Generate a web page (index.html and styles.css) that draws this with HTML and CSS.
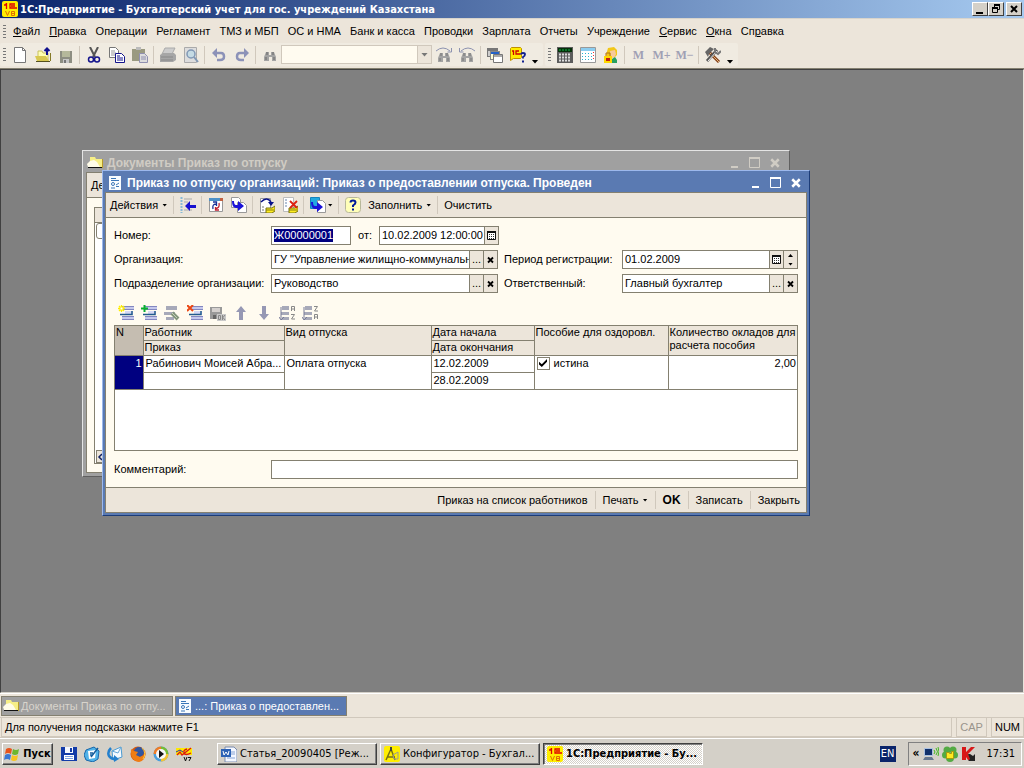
FILE: index.html
```html
<!DOCTYPE html>
<html lang="ru">
<head>
<meta charset="utf-8">
<title>1С:Предприятие - Бухгалтерский учет для гос. учреждений Казахстана</title>
<link rel="stylesheet" href="styles.css">
</head>
<body>
<svg class="sprite" aria-hidden="true">
  <symbol id="i-1c" viewBox="0 0 16 16"><rect width="16" height="16" rx="2" fill="#ffee00"/><path d="M2 4h2V2.500M4.500 2v6M13 3H8v4h7M9 5h4" fill="none" stroke="#e00000" stroke-width="1.300"/><path d="M3.500 10l2 4.500 2-4.500M9.500 10.500h3v4h-3zM9.500 12.500h3" fill="none" stroke="#e07000"/></symbol>
  <symbol id="i-new" viewBox="0 0 16 16"><path d="M2.500.500h8l3 3v12h-11z" fill="#fff" stroke="#777"/><path d="M10.500.500v3h3" fill="none" stroke="#777"/></symbol>
  <symbol id="i-open" viewBox="0 0 16 16"><path d="M3 4h4l1 2h5v8H3z" fill="#ffffb0" stroke="#c8c060"/><path d="M0 9h11l3 5H2z" fill="#d8c850"/><path d="M1 14h14v1H1z" fill="#555020"/><path d="M15 6h1v8h-1z" fill="#857a28"/><path d="M12 8V2M9.500 4L12 1.500 14.500 4" fill="none" stroke="#10108c" stroke-width="2"/></symbol>
  <symbol id="i-save" viewBox="0 0 16 16"><path d="M2 4h12v12H2z" fill="#8d8e82"/><path d="M4 4h8v6H4z" fill="#b5b89b"/><path d="M5 12h6v4H5z" fill="#c6c6c6"/><path d="M6 13h2v3H6z" fill="#777"/></symbol>
  <symbol id="i-cut" viewBox="0 0 16 16"><path d="M4 0l5 10M12 0L7 10" stroke="#555" stroke-width="2"/><circle cx="5" cy="12.500" r="2.500" fill="none" stroke="#14148c" stroke-width="1.500"/><circle cx="11" cy="12.500" r="2.500" fill="none" stroke="#14148c" stroke-width="1.500"/></symbol>
  <symbol id="i-copy" viewBox="0 0 16 16"><path d="M.5.500h6l3 3v7h-9z" fill="#fff" stroke="#777"/><path d="M2 4h4M2 6h5M2 8h5" stroke="#999"/><path d="M6.500 6.500h6l3 3v6h-9z" fill="#fff" stroke="#14148c"/><path d="M8 9h3M8 11h6M8 13h6" stroke="#14148c"/></symbol>
  <symbol id="i-paste" viewBox="0 0 16 16"><path d="M0 2h13v12H0z" fill="#9a9a80"/><path d="M4 0h5v3H4z" fill="#bbb"/><path d="M7.500 6.500h5l3 3v6h-8z" fill="#ddd" stroke="#9090b0"/><path d="M9 10h5M9 12h5" stroke="#9090b0"/></symbol>
  <symbol id="i-print" viewBox="0 0 16 16"><path d="M5 1h10l-3 6H2z" fill="#ccc" stroke="#aaa"/><path d="M0 8l3-2h11l2 2v5l-3 2H0z" fill="#a6a6a6"/><path d="M1 10h12M1 13h12" stroke="#888"/></symbol>
  <symbol id="i-preview" viewBox="0 0 16 16"><path d="M1.500.500h12v15h-12z" fill="#ddd" stroke="#aaa"/><circle cx="8" cy="7" r="4" fill="#c5dbe4" stroke="#8198b5" stroke-width="1.500"/><path d="M11 10l4 5" stroke="#8198b5" stroke-width="2"/></symbol>
  <symbol id="i-undo" viewBox="0 0 16 16"><path d="M4 6h6q3 0 3 3.500T9 13H6" fill="none" stroke="#8c92b8" stroke-width="2.500"/><path d="M1 6l5-5v10z" fill="#8c92b8"/></symbol>
  <symbol id="i-redo" viewBox="0 0 16 16"><path d="M12 6H6Q3 6 3 9.500T7 13h3" fill="none" stroke="#8c92b8" stroke-width="2.500"/><path d="M15 6l-5-5v10z" fill="#8c92b8"/></symbol>
  <symbol id="i-find" viewBox="0 0 16 16"><path d="M4 5h3v3h2V5h3l2 5v4h-4v-4H7v4H2v-4z" fill="#a3a3a3"/><path d="M5 5v3M11 5v3M4 10v3M12 10v3" stroke="#666"/></symbol>
  <symbol id="i-findn" viewBox="0 0 16 16"><path d="M4 6h3v3h2V6h3l2 5v4h-4v-4H7v4H2v-4z" fill="#a3a3a3"/><path d="M5 6v3M11 6v3M4 11v3M12 11v3" stroke="#777"/><path d="M0 4q7-6 14 0M15.500 1v4h-4" fill="none" stroke="#8c92b0"/></symbol>
  <symbol id="i-findp" viewBox="0 0 16 16"><path d="M4 6h3v3h2V6h3l2 5v4h-4v-4H7v4H2v-4z" fill="#a3a3a3"/><path d="M5 6v3M11 6v3M4 11v3M12 11v3" stroke="#777"/><path d="M16 4q-7-6-14 0M.5 1v4h4" fill="none" stroke="#8c92b0"/></symbol>
  <symbol id="i-wins" viewBox="0 0 16 16"><path d="M0 1h11v9H0z" fill="#777"/><path d="M1 4h8v5H1z" fill="#ccc"/><path d="M3 4h10v9H3z" fill="#888"/><path d="M4 5h8v2H4z" fill="#2462c8"/><path d="M4 7h8v5H4z" fill="#ffffd8"/><path d="M6.500 7.500h9v8h-9z" fill="#fff" stroke="#777"/><path d="M7 8h8v2H7z" fill="#aaa"/></symbol>
  <symbol id="i-1chelp" viewBox="0 0 16 16"><path d="M1.500.500h9l1 1v9l-1 1H3.500l-3 2v-12z" fill="#ffed00" stroke="#c09000"/><path d="M2 4h1.500v4M9 4H6v3h4.500" fill="none" stroke="#d00000" stroke-width="1.300"/><path d="M11 7.500q0-1.500 2-1.500t2 1.500q0 1.500-2 2.500v1.500M12 14.500h2" fill="none" stroke="#102090" stroke-width="1.800"/></symbol>
  <symbol id="i-calc" viewBox="0 0 16 16"><path d="M0 0h16v16H0z" fill="#5c5c5c"/><path d="M1 1h14v4H1z" fill="#06300a"/><path d="M2 3h12" stroke="#13b54a" stroke-dasharray="2 1"/><path d="M2 7.500h12M2 10.500h12M2 13.500h12" stroke="#ddd" stroke-width="2" stroke-dasharray="2 1"/></symbol>
  <symbol id="i-cal" viewBox="0 0 16 16"><path d="M.5.500h15v15H.5z" fill="#fff" stroke="#999"/><path d="M1 1h14v3H1z" fill="#8bcdf0"/><path d="M2 6.500h10M2 9.500h10M2 12.500h10" stroke="#27b0d0" stroke-dasharray="1 2"/><path d="M13.500 5v9" stroke="#e33" stroke-dasharray="1 2"/></symbol>
  <symbol id="i-user" viewBox="0 0 16 16"><path d="M5 1l6-1 3 3v5l-3 3H6L3 8z" fill="#f2c718"/><path d="M7 4l5-1 1 4-2 4H8z" fill="#f7c99a"/><path d="M9 12l3-2 2 3v3H9z" fill="#29a060"/><path d="M1 9h8v7H1z" fill="#ffd900"/><path d="M3 9V6h4v3" fill="none" stroke="#b07010"/><path d="M3 11h4v3H3z" fill="#c02010"/></symbol>
  <symbol id="i-tools" viewBox="0 0 16 16"><path d="M4 5l10 10" stroke="#884018" stroke-width="3"/><path d="M4 5l10 10" stroke="#ddb880"/><path d="M0 5l5-5 4 2-5 5-1 3z" fill="#666"/><path d="M12 3L2 14" stroke="#555" stroke-width="3"/><path d="M12 4L3 14" stroke="#eee"/><path d="M10 1v4l3 2 3-3" fill="none" stroke="#777" stroke-width="2"/></symbol>
  <symbol id="i-folder" viewBox="0 0 16 16"><path d="M3 2h5l1 2h6v8H3z" fill="#f6ee86"/><path d="M0 9l3-3 4-1 3 2 3 5H1z" fill="#fffce8"/><path d="M1 12h14v1H1z" fill="#111"/><path d="M15 4h1v9h-1z" fill="#b69b28"/></symbol>
  <symbol id="i-doc" viewBox="0 0 16 16"><path d="M2 1h12v14H2z" fill="#f8fcff"/><path d="M4 3.500h5M4 5.500h8" stroke="#3b77b8"/><circle cx="6" cy="9" r="1.500" fill="none" stroke="#3b77b8"/><path d="M9 10l3-2M9 11.500h3M4 13h4" stroke="#3b77b8"/></symbol>
  <symbol id="i-goto" viewBox="0 0 16 16"><path d="M1.500 0v16" stroke="#88bbd8" stroke-width="2" stroke-dasharray="2 1"/><path d="M4 2h8M4 5h4M4 13h8" stroke="#aaa"/><path d="M5 9l5-5v4h6v3h-6v3z" fill="#1710cf"/></symbol>
  <symbol id="i-refresh" viewBox="0 0 16 16"><path d="M1.500 2.500h13v12h-13z" fill="#fff" stroke="#999"/><path d="M1 1h14v3H1z" fill="#4d91c8"/><path d="M12 1h3v3h-3z" fill="#c06040"/><path d="M5 12q-1-5 3-5M5 5h3.500v4" fill="none" stroke="#173098" stroke-width="1.300"/><path d="M11 6q1 5-3 5.500M11 13H7.500v-3" fill="none" stroke="#c02030" stroke-width="1.300"/></symbol>
  <symbol id="i-based" viewBox="0 0 16 16"><path d="M.5.500h7l2 2v8h-9z" fill="#fff" stroke="#999"/><path d="M6.500 5.500h6l3 3v7h-9z" fill="#fff" stroke="#999"/><path d="M1 4h2q0 4 2 4h2V4l6 5-6 5v-3H5Q1 11 1 4z" fill="#1b13d8"/></symbol>
  <symbol id="i-post" viewBox="0 0 16 16"><path d="M1.500 1.500h10v14h-10z" fill="#fff" stroke="#999"/><path d="M3 10h2M3 13h2" stroke="#777"/><path d="M7 11h6l3-2v5l-3 2H7z" fill="#ffed20" stroke="#777010"/><path d="M7 13h8" stroke="#817a10"/><path d="M2 5q6-6 10 0" fill="none" stroke="#07108a" stroke-width="1.500"/><path d="M9 5h6l-3 4z" fill="#07108a"/></symbol>
  <symbol id="i-unpost" viewBox="0 0 16 16"><path d="M1.500.500h10v14h-10z" fill="#fff" stroke="#bbb"/><path d="M3 3h2M3 6h2M3 9h2" stroke="#6985ab"/><path d="M7 11h6l3-2v5l-3 2H7z" fill="#ffed20" stroke="#777010"/><path d="M7 13h8" stroke="#817a10"/><path d="M8 4l7 7M15 4l-7 7" stroke="#dc2010" stroke-width="1.800"/></symbol>
  <symbol id="i-input" viewBox="0 0 16 16"><path d="M.5.500h9v11h-9z" fill="#22a9df" stroke="#1684bd"/><path d="M7.500 3.500h5l3 3v9h-8z" fill="#fff" stroke="#999"/><path d="M1 5h2q0 4 2 4h2V5l6 5-6 5v-3H5Q1 12 1 5z" fill="#1b13d8"/></symbol>
  <symbol id="i-help" viewBox="0 0 16 16"><rect x=".5" y=".5" width="15" height="15" rx="3" fill="#ffffb8" stroke="#b8b89a"/><path d="M5.500 5.500q0-2 2.500-2t2.500 2q0 1.500-2.500 3V10M7 12.500h2" fill="none" stroke="#001c9a" stroke-width="2"/></symbol>
  <symbol id="i-rows" viewBox="0 0 16 16"><path d="M4 1h12v4H4zM4 11h12v4H4z" fill="#c5c8ec"/><path d="M4 1.500h12M4 4.500h12M4 11.500h12M4 14.500h12" stroke="#8387c0"/><path d="M7 6h8v4H7z" fill="#d4d8f4"/><path d="M2 9.500h12V6" fill="none" stroke="#225a8c" stroke-width="1.500"/></symbol>
  <symbol id="i-radd" viewBox="0 0 16 16"><use href="#i-rows"/><path d="M0 3.500h7M3.500 0v7M1 1l5 5M6 1L1 6" stroke="#ffee00" stroke-width="1.300"/><path d="M2.500 2.500h2v2h-2z" fill="#fff"/></symbol>
  <symbol id="i-rplus" viewBox="0 0 16 16"><use href="#i-rows"/><path d="M0 3.500h7M3.500 0v7" stroke="#09b030" stroke-width="2"/></symbol>
  <symbol id="i-redit" viewBox="0 0 16 16"><path d="M2 1h11v4H2zM0 7h11v3H0zM2 12h8v3H2z" fill="#a7a9b9"/><path d="M8 8l6 6" stroke="#83967c" stroke-width="4"/><path d="M8 8l5 5" stroke="#c4d0b8"/></symbol>
  <symbol id="i-rdel" viewBox="0 0 16 16"><use href="#i-rows"/><path d="M0 0l6 6M6 0L0 6" stroke="#ea4614" stroke-width="2"/></symbol>
  <symbol id="i-rok" viewBox="0 0 16 16"><path d="M0 2h12v12H0z" fill="#999"/><path d="M2 3h8v4H2z" fill="#d4d0ce"/><path d="M3 10h3v4H3z" fill="#666"/><path d="M7 9h9v7H7z" fill="#c9c9c9"/><path d="M8.500 10.500h2v4h-2zM12.500 10v5M15 10l-2 2.500 2 2.500" fill="none" stroke="#888"/></symbol>
  <symbol id="i-up" viewBox="0 0 16 16"><path d="M8 1l5 6h-3v8H6V7H3z" fill="#9698b4"/></symbol>
  <symbol id="i-down" viewBox="0 0 16 16"><path d="M8 15l5-6h-3V1H6v8H3z" fill="#9698b4"/></symbol>
  <symbol id="i-sort" viewBox="0 0 16 16"><path d="M3 1h7v4H3zM2 7h8v3H2zM3 12h7v3H3z" fill="#a7a9b9"/><path d="M2 2v12M0 12l2 3 3-3" fill="none" stroke="#777b98"/></symbol>
  <symbol id="i-az" viewBox="0 0 16 16"><use href="#i-sort"/><path d="M12.500 6V1.500h3V6M12 4h4M12 9.500h3.500L12.500 14H16" fill="none" stroke="#888"/></symbol>
  <symbol id="i-za" viewBox="0 0 16 16"><use href="#i-sort"/><path d="M12.500 14V9.500h3V14M12 12h4M12 1.500h3.500L12.500 6H16" fill="none" stroke="#888"/></symbol>
  <symbol id="i-grid" viewBox="0 0 9 9"><path d="M.5.500h8v8h-8z" fill="#fff" stroke="#111"/><path d="M0 1h9" stroke="#111" stroke-width="2"/><path d="M2 3.500h6M2 5.500h6M2 7.500h6" stroke="#333" stroke-dasharray="1 1"/></symbol>
  <symbol id="i-x" viewBox="0 0 8 8"><path d="M1 1l6 6M7 1L1 7" stroke="currentColor" stroke-width="2"/></symbol>
  <symbol id="i-sx" viewBox="0 0 8 8"><path d="M1 1.500l5 5M6 1.500l-5 5" stroke="currentColor" stroke-width="1.800"/></symbol>
  <symbol id="i-min" viewBox="0 0 10 10"><path d="M1 8h7v2H1z" fill="currentColor"/></symbol>
  <symbol id="i-max" viewBox="0 0 12 12"><path d="M.5 1.500h10v9H.5z" fill="none" stroke="currentColor"/><path d="M0 1h11" stroke="currentColor" stroke-width="2"/></symbol>
  <symbol id="i-rest" viewBox="0 0 10 10"><path d="M3.500 3V1.500h5v4H7" fill="none" stroke="#000"/><path d="M3 1h6" stroke="#000" stroke-width="2"/><path d="M1.500 4.500h5v4h-5z" fill="none" stroke="#000"/><path d="M1 4h6" stroke="#000" stroke-width="2"/></symbol>
  <symbol id="i-win" viewBox="0 0 16 16"><path d="M2 3q3-2 6 0L7 8Q4 6 1 8z" fill="#e8541c"/><path d="M9 3q3 2 6 0l-1 5q-3 2-6 0z" fill="#6db72e"/><path d="M1 9q3-2 6 0l-1 5q-3-2-6 0z" fill="#3a78d4"/><path d="M8 9q3 2 6 0l-1 5q-3 2-6 0z" fill="#f8c420"/></symbol>
  <symbol id="i-floppy" viewBox="0 0 16 16"><path d="M0 1h16v14H1l-1-1z" fill="#123ba8"/><path d="M4 1h8v6H4z" fill="#f4f8ff"/><path d="M9 2h2v4H9z" fill="#123ba8"/><path d="M3 9h10v5H3z" fill="#fff"/><path d="M4 10.500h8M4 12.500h8" stroke="#7ca0e0"/></symbol>
  <symbol id="i-note" viewBox="0 0 16 16"><path d="M2 4l8-3 5 4-1 8-5 3-7-2-2-5z" fill="#4fb2e8" stroke="#1767aa"/><path d="M4 5l8-1-1 8-6 1z" fill="#fff"/><path d="M7 11l7-9M6 7h3M6 9h2" stroke="#145d9c" stroke-width="1.500"/></symbol>
  <symbol id="i-mail" viewBox="0 0 16 16"><path d="M5 5l9-4 1 10-9 3z" fill="#f4faff" stroke="#4b9bd2"/><path d="M5 5l6 2 3-6" fill="none" stroke="#68a9d8"/><path d="M4 2q-4 4-2 8 2 3 6 3" fill="none" stroke="#2480cd" stroke-width="2.500"/><path d="M7 9v7l5-3z" fill="#2480cd"/></symbol>
  <symbol id="i-fox" viewBox="0 0 16 16"><circle cx="8" cy="8" r="7.500" fill="#d65a10"/><circle cx="9" cy="6" r="5" fill="#3156a0"/><path d="M1 3l3 2 4 1-2 3 4 2 4-2 1-5q2 10-6 12Q0 15 1 3" fill="#ef7d13"/><path d="M12 2q5 5 1 11" fill="none" stroke="#ffc83a"/></symbol>
  <symbol id="i-play" viewBox="0 0 16 16"><circle cx="8" cy="8" r="7.500" fill="#4a9edc"/><path d="M8 8V.5A7.500 7.500 0 0 1 15.500 8z" fill="#77bd34"/><path d="M8 8h7.500A7.500 7.500 0 0 1 8 15.500z" fill="#f4c432"/><path d="M8 8H.5A7.500 7.500 0 0 1 8 .5z" fill="#ef7c26"/><circle cx="8" cy="8" r="5" fill="#f8f8f8"/><path d="M6 4l5 4-5 4z" fill="#111"/></symbol>
  <symbol id="i-v7" viewBox="0 0 16 16"><path d="M0 2h16v7H0z" fill="#ffe900"/><path d="M1 9l3-3 2 3 9-7M11 3q-4 1-3 4t7 0" fill="none" stroke="#d81818" stroke-width="1.300"/><path d="M0 6l4-2 3 2" fill="none" stroke="#2230b0"/><path d="M8 11l1.500 4 1.500-4M12 11.500h3L13 15" fill="none" stroke="#111"/></symbol>
  <symbol id="i-word" viewBox="0 0 16 16"><path d="M4 1h9l3 3v12H4z" fill="#f4f7ff" stroke="#7a8cae"/><path d="M10 6h4M10 8h4M6 12h8" stroke="#87a4d4"/><path d="M0 3h10v8H0z" fill="#2d62b5"/><path d="M2 5l1 4 2-3 2 3 1-4" fill="none" stroke="#fff"/></symbol>
  <symbol id="i-conf" viewBox="0 0 16 16"><rect width="16" height="16" rx="2" fill="#ffee00"/><path d="M7 3l-5 11M7 3l4 11M3 11h8" fill="none" stroke="#777210" stroke-width="1.500"/><path d="M9 9l5-3v7h-4z" fill="none" stroke="#999"/><path d="M6 1h2v4H6z" fill="#444"/></symbol>
  <symbol id="i-net" viewBox="0 0 16 16"><path d="M1 2h9v8H1z" fill="#aac0e0"/><path d="M2 3h7v6H2z" fill="#10306a"/><path d="M0 14l2-3h7l2 3z" fill="#667790"/><path d="M11 4q2 2 0 4M13 2q3 4 0 7M15 1q2 5 0 9" fill="none" stroke="#43b820"/></symbol>
  <symbol id="i-bug" viewBox="0 0 16 16"><circle cx="5" cy="4" r="3.500" fill="#54aa43"/><circle cx="11" cy="4" r="3.500" fill="#54aa43"/><circle cx="3.500" cy="9" r="3.500" fill="#54aa43"/><circle cx="12.500" cy="9" r="3.500" fill="#54aa43"/><circle cx="8" cy="12" r="4" fill="#54aa43"/><path d="M4.500 6.500v6h7v-7h-2v2h-2v-1z" fill="#ffea20" stroke="#a89a10"/></symbol>
  <symbol id="i-kav" viewBox="0 0 16 16"><path d="M1 1h4v5l5-5h4L7 8l4 6H7L5 11v3H1z" fill="#d81818"/><path d="M7 8l2 0 3 2 2-2v7H7l2-2z" fill="#222"/></symbol>
</svg>

<header class="app-title">
  <svg class="ico"><use href="#i-1c"/></svg>
  <h1>1С:Предприятие - Бухгалтерский учет для гос. учреждений Казахстана</h1>
  <div class="win-btns">
    <button aria-label="Свернуть"><svg class="ico10"><use href="#i-min"/></svg></button><button aria-label="Восстановить"><svg class="ico10"><use href="#i-rest"/></svg></button>
    <button class="apart" aria-label="Закрыть"><svg class="ico8"><use href="#i-x"/></svg></button>
  </div>
</header>

<nav class="menu">
  <span class="grip"></span>
  <div class="menu-items">
    <button><u>Ф</u>айл</button><button><u>П</u>равка</button><button>Операции</button><button>Регламент</button><button>ТМЗ и МБП</button><button>ОС и НМА</button><button>Банк и касса</button><button>Проводки</button><button>Зарплата</button><button>Отчеты</button><button>Учреждение</button><button><u>С</u>ервис</button><button><u>О</u>кна</button><button>Сп<u>р</u>авка</button>
  </div>
</nav>

<div class="toolbars">
  <div class="toolbar">
    <span class="grip"></span>
    <button aria-label="Новый"><svg class="ico"><use href="#i-new"/></svg></button>
    <button aria-label="Открыть"><svg class="ico"><use href="#i-open"/></svg></button>
    <button aria-label="Сохранить"><svg class="ico"><use href="#i-save"/></svg></button>
    <i class="sep"></i>
    <button aria-label="Вырезать"><svg class="ico"><use href="#i-cut"/></svg></button>
    <button aria-label="Копировать"><svg class="ico"><use href="#i-copy"/></svg></button>
    <button aria-label="Вставить"><svg class="ico"><use href="#i-paste"/></svg></button>
    <i class="sep"></i>
    <button aria-label="Печать"><svg class="ico"><use href="#i-print"/></svg></button>
    <button aria-label="Просмотр"><svg class="ico"><use href="#i-preview"/></svg></button>
    <i class="sep"></i>
    <button aria-label="Отменить"><svg class="ico"><use href="#i-undo"/></svg></button>
    <button aria-label="Вернуть"><svg class="ico"><use href="#i-redo"/></svg></button>
    <i class="sep"></i>
    <button aria-label="Найти"><svg class="ico"><use href="#i-find"/></svg></button>
    <div class="combo"><input type="text" aria-label="Поиск"><button aria-label="Список"><i class="tri"></i></button></div>
    <button aria-label="Найти далее"><svg class="ico"><use href="#i-findn"/></svg></button>
    <button aria-label="Найти ранее"><svg class="ico"><use href="#i-findp"/></svg></button>
    <i class="sep"></i>
    <button aria-label="Окна"><svg class="ico"><use href="#i-wins"/></svg></button>
    <button aria-label="Справка 1С"><svg class="ico"><use href="#i-1chelp"/></svg></button>
    <button class="more" aria-label="Ещё"><i class="tri"></i></button>
  </div>
  <div class="toolbar">
    <span class="grip"></span>
    <button aria-label="Калькулятор"><svg class="ico"><use href="#i-calc"/></svg></button>
    <button aria-label="Календарь"><svg class="ico"><use href="#i-cal"/></svg></button>
    <button aria-label="Пользователи"><svg class="ico"><use href="#i-user"/></svg></button>
    <i class="sep"></i>
    <button class="mem">M</button><button class="mem">M+</button><button class="mem">M−</button>
    <i class="sep"></i>
    <button aria-label="Настройка"><svg class="ico"><use href="#i-tools"/></svg></button>
    <button class="more" aria-label="Ещё"><i class="tri"></i></button>
  </div>
</div>

<main class="workspace">
  <section class="window list-window">
    <header class="win-title">
      <svg class="ico"><use href="#i-folder"/></svg>
      <h2>Документы Приказ по отпуску</h2>
      <button aria-label="Свернуть"><svg class="ico10"><use href="#i-min"/></svg></button>
      <button aria-label="Развернуть"><svg class="ico12"><use href="#i-max"/></svg></button>
      <button aria-label="Закрыть"><svg class="ico10"><use href="#i-x"/></svg></button>
    </header>
    <div class="win-body">
      <div class="cmdbar"><button>Де</button></div>
      <div class="list-area"><div class="list-head"></div><div class="list-row"></div><button class="scroll" aria-label="Влево"><svg class="ico8" viewBox="0 0 8 8"><path d="M5 1L2 4l3 3" fill="none" stroke="#102060" stroke-width="1.500"/></svg></button></div>
    </div>
  </section>

  <section class="window doc-window">
    <header class="win-title">
      <svg class="ico"><use href="#i-doc"/></svg>
      <h2>Приказ по отпуску организаций: Приказ о предоставлении отпуска. Проведен</h2>
      <button aria-label="Свернуть"><svg class="ico10"><use href="#i-min"/></svg></button>
      <button aria-label="Развернуть"><svg class="ico12"><use href="#i-max"/></svg></button>
      <button aria-label="Закрыть"><svg class="ico10"><use href="#i-x"/></svg></button>
    </header>
    <div class="win-body">
      <div class="cmdbar">
        <button>Действия <i class="tri small"></i></button><i class="sep"></i>
        <button class="ib" aria-label="Найти в списке"><svg class="ico"><use href="#i-goto"/></svg></button><i class="sep"></i>
        <button class="ib" aria-label="Перечитать"><svg class="ico"><use href="#i-refresh"/></svg></button>
        <button class="ib" aria-label="Скопировать"><svg class="ico"><use href="#i-based"/></svg></button><i class="sep"></i>
        <button class="ib" aria-label="Провести"><svg class="ico"><use href="#i-post"/></svg></button>
        <button class="ib" aria-label="Отмена проведения"><svg class="ico"><use href="#i-unpost"/></svg></button><i class="sep"></i>
        <button class="ib wide" aria-label="Ввести на основании"><svg class="ico"><use href="#i-input"/></svg><i class="tri small"></i></button><i class="sep"></i>
        <button class="ib" aria-label="Справка"><svg class="ico"><use href="#i-help"/></svg></button>
        <button>Заполнить <i class="tri small"></i></button><i class="sep"></i>
        <button>Очистить</button>
      </div>
      <form class="form">
        <label for="num">Номер:</label>
        <div class="pair">
          <div class="field num"><input id="num" type="text" value="Ж00000001"></div>
          <label for="date">от:</label>
          <div class="field date"><input id="date" type="text" value="10.02.2009 12:00:00"><button type="button" aria-label="Календарь"><svg class="ico9"><use href="#i-grid"/></svg></button></div>
        </div>
        <label class="first" for="org">Организация:</label>
        <div class="field"><input id="org" type="text" value='ГУ "Управление жилищно-коммунального хозяйства"'><button type="button">...</button><button type="button" aria-label="Очистить"><svg class="ico8"><use href="#i-sx"/></svg></button></div>
        <label for="period">Период регистрации:</label>
        <div class="field"><input id="period" type="text" value="01.02.2009"><button type="button" aria-label="Календарь"><svg class="ico9"><use href="#i-grid"/></svg></button><button class="spin" type="button" aria-label="Изменить"><i class="tri small up"></i><i class="tri small"></i></button></div>
        <label class="first" for="dep">Подразделение организации:</label>
        <div class="field"><input id="dep" type="text" value="Руководство"><button type="button">...</button><button type="button" aria-label="Очистить"><svg class="ico8"><use href="#i-sx"/></svg></button></div>
        <label for="resp">Ответственный:</label>
        <div class="field"><input id="resp" type="text" value="Главный бухгалтер"><button type="button">...</button><button type="button" aria-label="Очистить"><svg class="ico8"><use href="#i-sx"/></svg></button></div>
      </form>
      <div class="rowbar">
        <button aria-label="Добавить"><svg class="ico"><use href="#i-radd"/></svg></button>
        <button aria-label="Добавить копию"><svg class="ico"><use href="#i-rplus"/></svg></button>
        <button aria-label="Изменить"><svg class="ico"><use href="#i-redit"/></svg></button>
        <button aria-label="Удалить"><svg class="ico"><use href="#i-rdel"/></svg></button>
        <button aria-label="Закончить"><svg class="ico"><use href="#i-rok"/></svg></button>
        <button aria-label="Вверх"><svg class="ico"><use href="#i-up"/></svg></button>
        <button aria-label="Вниз"><svg class="ico"><use href="#i-down"/></svg></button>
        <button aria-label="По возрастанию"><svg class="ico"><use href="#i-az"/></svg></button>
        <button aria-label="По убыванию"><svg class="ico"><use href="#i-za"/></svg></button>
      </div>
      <div class="grid">
        <table>
          <colgroup><col class="c1"><col class="c2"><col class="c3"><col class="c4"><col class="c5"><col class="c6"></colgroup>
          <thead>
            <tr><th class="n" rowspan="2">N</th><th>Работник</th><th rowspan="2">Вид отпуска</th><th>Дата начала</th><th rowspan="2">Пособие для оздоровл.</th><th rowspan="2">Количество окладов для<br>расчета пособия</th></tr>
            <tr><th>Приказ</th><th>Дата окончания</th></tr>
          </thead>
          <tbody>
            <tr><td class="cur" rowspan="2">1</td><td>Рабинович Моисей Абра...</td><td rowspan="2">Оплата отпуска</td><td>12.02.2009</td><td rowspan="2"><label class="check"><input type="checkbox" checked>истина</label></td><td class="right" rowspan="2">2,00</td></tr>
            <tr><td></td><td>28.02.2009</td></tr>
          </tbody>
        </table>
      </div>
      <div class="comment">
        <label for="comment">Комментарий:</label>
        <div class="field"><input id="comment" type="text"></div>
      </div>
      <footer class="cmdbar actions">
        <button>Приказ на список работников</button><i class="sep"></i><button>Печать <i class="tri small"></i></button><i class="sep"></i><button class="ok">OK</button><i class="sep"></i><button>Записать</button><i class="sep"></i><button>Закрыть</button>
      </footer>
    </div>
  </section>
</main>

<div class="win-tabs">
  <button><svg class="ico"><use href="#i-folder"/></svg>Документы Приказ по отпу...</button>
  <button class="active"><svg class="ico"><use href="#i-doc"/></svg>...: Приказ о предоставлен...</button>
</div>
<div class="status"><span class="hint">Для получения подсказки нажмите F1</span><span class="off">CAP</span><span>NUM</span></div>

<footer class="taskbar">
  <button class="start"><svg class="ico"><use href="#i-win"/></svg>Пуск</button>
  <div class="quick">
    <button aria-label="Дискета"><svg class="ico"><use href="#i-floppy"/></svg></button>
    <button aria-label="Рабочий стол"><svg class="ico"><use href="#i-note"/></svg></button>
    <button aria-label="Почта"><svg class="ico"><use href="#i-mail"/></svg></button>
    <button aria-label="Браузер"><svg class="ico"><use href="#i-fox"/></svg></button>
    <button aria-label="Проигрыватель"><svg class="ico"><use href="#i-play"/></svg></button>
    <button aria-label="1С 7"><svg class="ico"><use href="#i-v7"/></svg></button>
  </div>
  <div class="tasks">
    <button><svg class="ico"><use href="#i-word"/></svg>Статья_20090405 [Реж...</button>
    <button><svg class="ico"><use href="#i-conf"/></svg>Конфигуратор - Бухгал...</button>
    <button class="pressed"><svg class="ico"><use href="#i-1c"/></svg>1С:Предприятие - Бу...</button>
  </div>
  <button class="lang">EN</button>
  <div class="tray"><b>«</b><svg class="ico"><use href="#i-net"/></svg><svg class="ico"><use href="#i-bug"/></svg><svg class="ico"><use href="#i-kav"/></svg><time>17:31</time></div>
</footer>
<script src="main.js"></script>
</body>
</html>
```
FILE: main.js
```js
const num = document.getElementById('num');
num.focus({ preventScroll: true });
num.select();
```
FILE: styles.css
```css
* { box-sizing: border-box; }
:root {
  --face: #ece5da;
  --line: #848070;
  --soft: #d0c8bc;
  --paper: #fffbf0;
  --blue: #5a7ab2;
  --system: #d4d0c8;
}
body {
  margin: 0;
  height: 100vh;
  display: flex;
  flex-direction: column;
  overflow: hidden;
  background: var(--face);
  color: #000;
  font: 11px/13px "Liberation Sans", Arial, sans-serif;
}
button, input {
  font: inherit;
  color: inherit;
  margin: 0;
  padding: 0;
  border: 0;
  background: none;
  border-radius: 0;
  outline: 0;
}
button { display: flex; align-items: center; justify-content: center; white-space: nowrap; }
h1, h2 { margin: 0; font-weight: bold; white-space: nowrap; }
svg { flex: none; display: block; }
.sprite { position: absolute; width: 0; height: 0; }
.ico { width: 16px; height: 16px; }
.ico12 { width: 12px; height: 12px; }
.ico10 { width: 10px; height: 10px; }
.ico9 { width: 9px; height: 9px; }
.ico8 { width: 8px; height: 8px; }
.tri { flex: none; width: 7px; height: 4px; background: currentColor; clip-path: polygon(0 0, 100% 0, 50% 100%); }
.tri.small { width: 5px; height: 3px; margin-left: 4px; }
.tri.up { transform: rotate(180deg); }
.sep { width: 1px; height: 18px; margin: 0 2px; background: var(--soft); }
.grip { width: 3px; height: 13px; background: repeating-linear-gradient(#777 0 1px, transparent 1px 3px); }

.app-title {
  flex: none;
  height: 19px;
  display: flex;
  align-items: center;
  gap: 2px;
  padding: 0 2px;
  background: linear-gradient(90deg, #0a246a, #a6caf0);
  border-bottom: 1px solid #d8d4cc;
  color: #fff;
}
.app-title h1 { flex: 1; font: bold 11px/13px "DejaVu Sans Condensed", "DejaVu Sans", sans-serif; }
.win-btns { display: flex; }
.win-btns button {
  width: 16px;
  height: 14px;
  background: var(--system);
  color: #000;
  border: 1px solid;
  border-color: #fff #404040 #404040 #fff;
}
.win-btns .apart { margin-left: 2px; }

.menu { flex: none; height: 24px; display: flex; align-items: center; padding-left: 3px; }
.menu-items { width: 771px; margin-left: 7px; display: flex; justify-content: space-between; }
.toolbars { flex: none; height: 26px; display: flex; gap: 2px; padding-bottom: 2px; border-bottom: 1px solid var(--line); }
.toolbar { display: flex; align-items: center; background: #f0ebe1; padding: 0 2px 0 3px; border-radius: 2px; }
.toolbar > button { width: 23px; height: 22px; }
.toolbar .grip { margin-right: 2px; }
.toolbar > .more { width: 12px; align-items: flex-end; padding-bottom: 2px; }
.toolbar > .mem { font: bold 12px/14px "Liberation Serif", serif; color: #a0a0b4; }
.combo { display: flex; width: 151px; height: 19px; border: 1px solid var(--soft); background: var(--paper); }
.combo input { flex: 1; min-width: 0; }
.combo button { width: 14px; background: var(--face); border-left: 1px solid var(--soft); color: #777; }

.workspace { flex: 1; position: relative; min-height: 0; overflow: hidden; background: #808080; border: 1px solid #404040; border-right-color: #e8e4dc; border-bottom-color: var(--system); }
.window { position: absolute; display: flex; flex-direction: column; width: 708px; }
.list-window { left: 81px; top: 80px; height: 327px; padding: 1px 3px 3px; background: #a0a0a0; border: 1px solid; border-color: #e4e4e4 #606060 #606060 #e4e4e4; color: #d0ccc4; }
.doc-window { left: 101px; top: 100px; padding: 1px 2px 2px; background: var(--blue); border: 1px solid; border-color: #9cb8ec #1c3c78 #1c3c78 #9cb8ec; color: #fff; }
.win-title { flex: none; height: 20px; display: flex; align-items: center; padding: 2px 1px 0 2px; }
.win-title h2 { flex: 1; margin-left: 4px; font-size: 12px; }
.win-title button { width: 20px; height: 16px; }
.win-body { flex: 1; display: flex; flex-direction: column; min-height: 0; border: 1px solid var(--line); background: var(--paper); color: #000; }
.list-window .win-title { padding-left: 1px; }
.cmdbar { flex: none; display: flex; align-items: center; height: 25px; background: var(--face); border-bottom: 1px solid var(--line); }
.cmdbar > button { height: 21px; padding: 0 4px; }
.cmdbar > .ib { width: 23px; padding: 0; }
.cmdbar > .wide { width: 30px; }
.wide .tri.small { margin-left: 2px; }
.list-area { flex: 1; display: flex; flex-direction: column; margin: 9px 8px 8px 7px; border: 1px solid var(--line); background: #fff; }
.list-head { height: 15px; background: var(--face); border-bottom: 1px solid var(--line); }
.list-row { width: 40px; height: 16px; margin-left: 1px; border: 1px solid var(--line); border-radius: 3px; }
.scroll { width: 14px; height: 13px; margin: auto 0 0 1px; justify-content: flex-start; border: 1px solid var(--line); background: var(--face); }

.form { display: grid; grid-template-columns: 151px 227px 112px 1fr; gap: 5px 6px; align-items: center; padding: 8px 8px 0; }
.form label { white-space: nowrap; }
.first { grid-column: 1; }
.pair { grid-column: 2 / 5; display: flex; align-items: center; gap: 7px; }
.field { flex: 1; min-width: 0; height: 19px; display: flex; border: 1px solid var(--line); background: #fff; }
.field input { flex: 1; width: 0; min-width: 0; padding-left: 2px; }
.field input::selection { background: #000080; color: #fff; }
.field button { width: 14px; background: var(--face); border-left: 1px solid var(--line); }
.field .spin { flex-direction: column; gap: 6px; }
.spin .tri.small { margin: 0; }
.field.num { flex: none; width: 80px; }
.field.date { flex: none; width: 120px; }
.rowbar { display: flex; height: 24px; align-items: center; margin-top: 8px; padding-left: 8px; }
.rowbar button { width: 23px; height: 22px; }
.grid { height: 126px; margin: 0 8px; border: 1px solid var(--line); background: #fff; }
table { width: 100%; table-layout: fixed; border-collapse: collapse; }
.c1 { width: 28px; } .c2 { width: 141px; } .c3 { width: 147px; } .c4 { width: 103px; } .c5 { width: 134px; }
th, td { padding: 0 1px 0 2px; border: 1px solid var(--line); font-weight: normal; text-align: left; vertical-align: top; white-space: nowrap; }
table tr > * { border-top: 0; }
table tr > *:last-child { border-right: 0; }
.n, .cur { border-left: 0; }
thead tr:nth-child(2) > *:last-child, tbody tr:nth-child(2) > *:last-child { border-right: 1px solid var(--line); }
th { height: 15px; background: var(--face); padding: 0 0 0 1px; }
thead tr:first-child > th { height: 14px; }
td { height: 17px; padding-top: 1px; }
.n { background: #c5bdb1; }
.cur { background: #000080; color: #fff; text-align: right; }
.right { text-align: right; }
.check { display: flex; align-items: center; gap: 4px; }
.check input { appearance: none; width: 13px; height: 13px; border: 1px solid var(--line); background: #fff; display: grid; place-items: center; }
.check input:checked::before { content: ""; width: 8px; height: 8px; background: #000; clip-path: polygon(0 35%, 35% 65%, 100% 0, 100% 35%, 35% 100%, 0 70%); }
.comment { display: grid; grid-template-columns: 157px 1fr; align-items: center; padding: 9px 8px 8px; }
.actions { justify-content: flex-end; padding-right: 2px; border-bottom: 0; border-top: 1px solid var(--line); }
.actions > .sep { margin: 0 3px; }
.actions > .ok { font-weight: bold; font-size: 12px; }

.win-tabs { flex: none; display: flex; gap: 2px; height: 24px; padding: 2px 1px; border-top: 1px solid #fff; }
.win-tabs button { width: 172px; height: 20px; justify-content: flex-start; gap: 2px; padding: 0 1px; background: #a0a0a0; border: 1px solid var(--line); color: #d8d4cc; }
.win-tabs .active { background: var(--blue); color: #fff; }
.status { flex: none; display: flex; gap: 4px; height: 21px; padding-left: 1px; border-top: 1px solid var(--soft); border-bottom: 1px solid var(--face); }
.status span { padding: 3px; border: 1px solid var(--soft); border-top: 0; }
.status .hint { flex: 1; }
.status .off { color: #99948c; }

.taskbar { flex: none; display: flex; align-items: center; height: 30px; padding: 0 2px; background: var(--system); border-top: 1px solid #fff; box-shadow: 0 -1px var(--soft); font: 11px/13px "DejaVu Sans Condensed", "DejaVu Sans", sans-serif; }
.start, .tasks button { height: 22px; gap: 3px; border: 1px solid; border-color: #fff #404040 #404040 #fff; box-shadow: inset -1px -1px #808080; }
.start { width: 51px; font-weight: bold; }
.quick { display: flex; margin-left: 4px; }
.quick button { width: 23px; height: 22px; }
.tasks { flex: 1; display: flex; gap: 3px; margin-left: 22px; }
.tasks button { width: 160px; justify-content: flex-start; padding-left: 3px; }
.tasks .pressed { font-weight: bold; border-color: #404040 #fff #fff #404040; box-shadow: inset 1px 1px #808080; background: repeating-conic-gradient(#fff 0 25%, #d4d0c8 0 50%) 0 0 / 2px 2px; }
.lang { width: 16px; height: 16px; background: #0a246a; color: #fff; }
.tray { display: flex; align-items: center; gap: 3px; height: 24px; margin-left: 12px; padding: 0 6px 0 4px; border: 1px solid; border-color: #808080 #fff #fff #808080; }
.tray b { font-size: 12px; margin-right: 1px; }
.tray time { margin-left: 6px; }
```
